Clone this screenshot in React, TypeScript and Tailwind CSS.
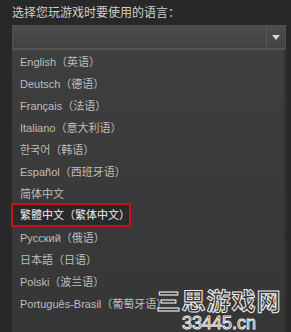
import React from "react";

const items = [
  "English（英语）",
  "Deutsch（德语）",
  "Français（法语）",
  "Italiano（意大利语）",
  "한국어（韩语）",
  "Español（西班牙语）",
  "简体中文",
  "繁體中文（繁体中文）",
  "Русский（俄语）",
  "日本語（日语）",
  "Polski（波兰语）",
  "Português-Brasil（葡萄牙语）",
];

export default function App() {
  return (
    <div className="relative w-[291px] h-[332px] overflow-hidden bg-[#282828] font-['Liberation_Sans','Noto_Sans_CJK_SC',sans-serif]">
      <div className="h-[25px] pl-3 pt-[5px] text-[12px] leading-[16px] text-[#cfcfcf]">
        选择您玩游戏时要使用的语言：
      </div>
      <div className="ml-3 mr-[5px] h-[24px] flex items-stretch justify-end border border-[#525252] bg-gradient-to-b from-[#4d4d4d] to-[#424242]">
        <div className="w-px my-[1px] bg-[#2e2e2e] border-r border-[#5a5a5a]" />
        <div className="w-[18px] flex items-center justify-center">
          <svg width="8" height="5" viewBox="0 0 8 5">
            <path d="M0 0 L8 0 L4 5 Z" fill="#d8d8d8" />
          </svg>
        </div>
      </div>
      <div className="ml-3 mr-[4px] h-[290px] pt-px border-t border-[#555] border-r-[3px] border-r-[#303030] bg-gradient-to-b from-[#3e3e3e] to-[#363636]">
        {items.map((t, i) => (
          <div key={i} className="relative h-[22px] flex items-center">
            {i === 7 ? (
              <div className="absolute left-[-1px] top-[-2px] w-[120px] h-[24px] border-2 border-[#c4141b] bg-[#2a2a2a] flex items-center pl-[7px] text-[11px] text-[#f0f0f0] whitespace-nowrap">
                {t}
              </div>
            ) : (
              <span className="pl-2 text-[11px] text-[#bdbdbd] whitespace-nowrap">{t}</span>
            )}
          </div>
        ))}
      </div>
      <div className="absolute left-[150px] top-[288px] w-[138px] text-center leading-none">
        <div className="h-[24px] text-[24px] font-bold tracking-[1px] text-transparent [-webkit-text-stroke:1px_#ececec] [font-family:'Noto_Sans_CJK_SC',sans-serif]">
          三思游戏网
        </div>
        <div className="mt-[2px] text-[18px] text-transparent [-webkit-text-stroke:1px_#e8e8e8] font-['Liberation_Sans',sans-serif]">
          33445.cn
        </div>
      </div>
    </div>
  );
}
